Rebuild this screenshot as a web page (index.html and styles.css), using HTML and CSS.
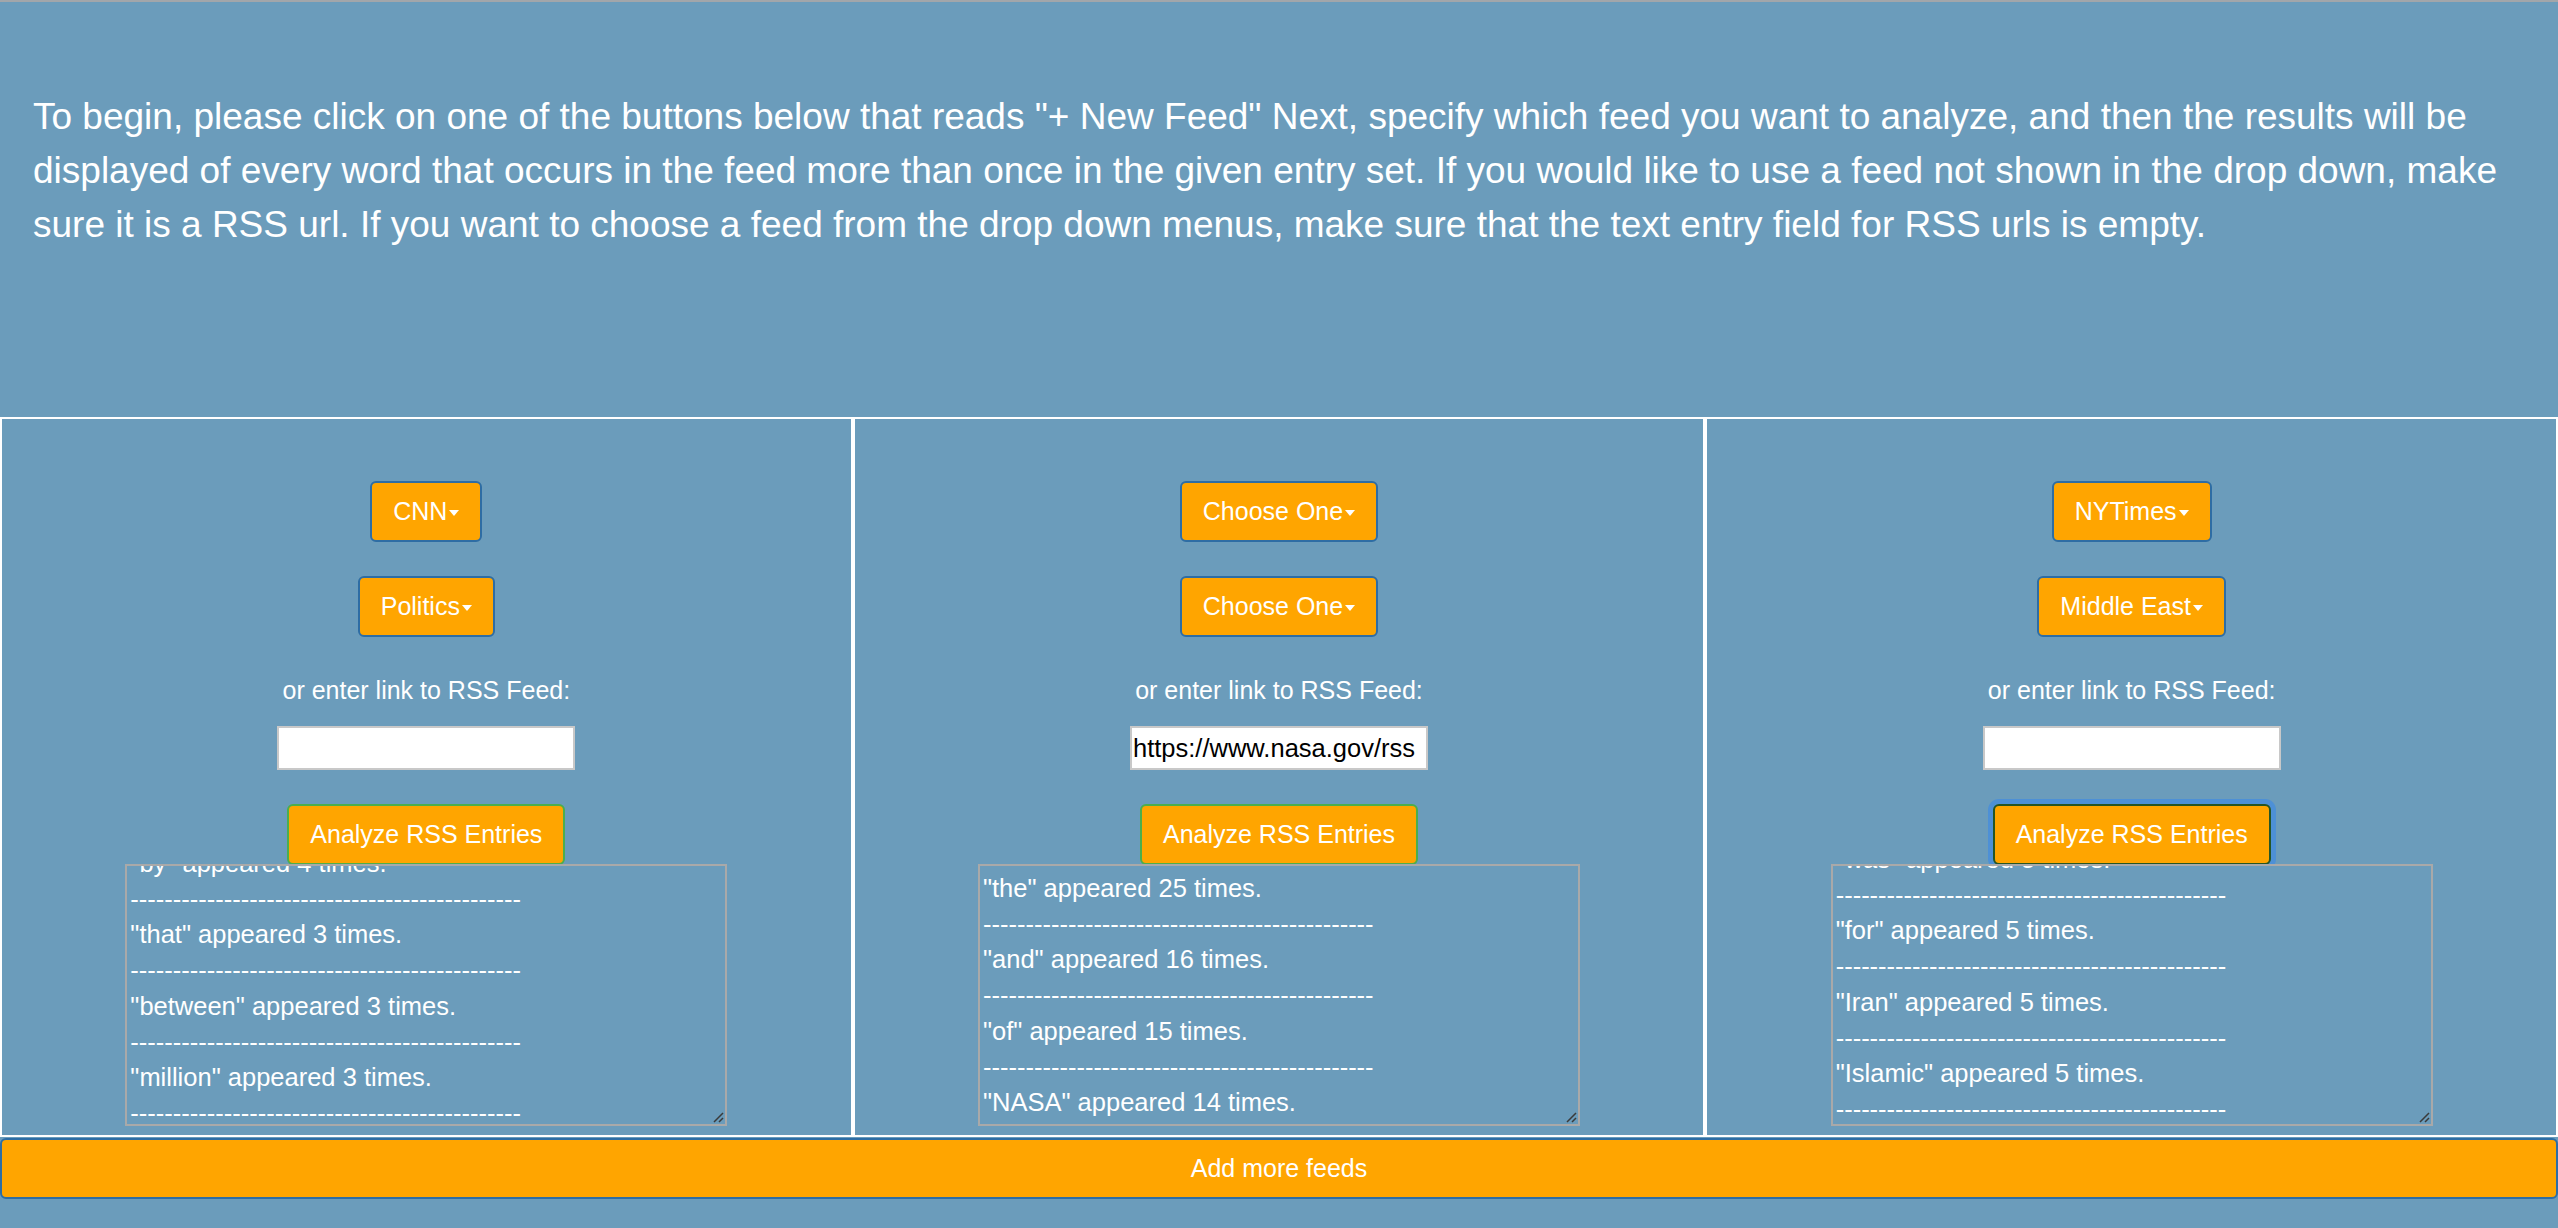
FILE: index.html
```html
<!DOCTYPE html>
<html lang="en">
<head>
<meta charset="utf-8">
<title>RSS Word Analyzer</title>
<link rel="stylesheet" href="styles.css">
</head>
<body>
<header class="intro">
  <p class="intro-text">To begin, please click on one of the buttons below that reads "+ New Feed" Next, specify which feed you want to analyze, and then the results will be displayed of every word that occurs in the feed more than once in the given entry set. If you would like to use a feed not shown in the drop down, make sure it is a RSS url. If you want to choose a feed from the drop down menus, make sure that the text entry field for RSS urls is empty.</p>
</header>
<main class="feeds">
  <section class="feed">
    <button class="btn dd">CNN<span class="caret"></span></button>
    <button class="btn dd">Politics<span class="caret"></span></button>
    <label class="rss-label">or enter link to RSS Feed:</label>
    <input class="rss-input" type="text" value="">
    <button class="btn analyze">Analyze RSS Entries</button>
    <div class="results">
      <div class="results-inner shift-left">
        <div class="line">"by" appeared 4 times.</div>
        <div class="line">----------------------------------------------</div>
        <div class="line">"that" appeared 3 times.</div>
        <div class="line">----------------------------------------------</div>
        <div class="line">"between" appeared 3 times.</div>
        <div class="line">----------------------------------------------</div>
        <div class="line">"million" appeared 3 times.</div>
        <div class="line">----------------------------------------------</div>
      </div>
      <svg class="grip" width="12" height="12" viewBox="0 0 12 12"><path d="M11 2 L2 11 M11 7 L7 11" stroke="#3a3a3a" stroke-width="1.5" fill="none"/></svg>
    </div>
  </section>
  <section class="feed">
    <button class="btn dd">Choose One<span class="caret"></span></button>
    <button class="btn dd">Choose One<span class="caret"></span></button>
    <label class="rss-label">or enter link to RSS Feed:</label>
    <input class="rss-input" type="text" value="https://www.nasa.gov/rss">
    <button class="btn analyze">Analyze RSS Entries</button>
    <div class="results">
      <div class="results-inner">
        <div class="line">"the" appeared 25 times.</div>
        <div class="line">----------------------------------------------</div>
        <div class="line">"and" appeared 16 times.</div>
        <div class="line">----------------------------------------------</div>
        <div class="line">"of" appeared 15 times.</div>
        <div class="line">----------------------------------------------</div>
        <div class="line">"NASA" appeared 14 times.</div>
        <div class="line">----------------------------------------------</div>
      </div>
      <svg class="grip" width="12" height="12" viewBox="0 0 12 12"><path d="M11 2 L2 11 M11 7 L7 11" stroke="#3a3a3a" stroke-width="1.5" fill="none"/></svg>
    </div>
  </section>
  <section class="feed">
    <button class="btn dd">NYTimes<span class="caret"></span></button>
    <button class="btn dd">Middle East<span class="caret"></span></button>
    <label class="rss-label">or enter link to RSS Feed:</label>
    <input class="rss-input" type="text" value="">
    <button class="btn analyze is-focused">Analyze RSS Entries</button>
    <div class="results">
      <div class="results-inner shift-right">
        <div class="line">"was" appeared 5 times.</div>
        <div class="line">----------------------------------------------</div>
        <div class="line">"for" appeared 5 times.</div>
        <div class="line">----------------------------------------------</div>
        <div class="line">"Iran" appeared 5 times.</div>
        <div class="line">----------------------------------------------</div>
        <div class="line">"Islamic" appeared 5 times.</div>
        <div class="line">----------------------------------------------</div>
      </div>
      <svg class="grip" width="12" height="12" viewBox="0 0 12 12"><path d="M11 2 L2 11 M11 7 L7 11" stroke="#3a3a3a" stroke-width="1.5" fill="none"/></svg>
    </div>
  </section>
</main>
<button class="add-more">Add more feeds</button>
</body>
</html>
```

FILE: styles.css
```css
* { box-sizing: border-box; }
html, body { margin: 0; padding: 0; }
body {
  background: #6b9cbb;
  color: #fff;
  font-family: "Liberation Sans", Arial, sans-serif;
  border-top: 2px solid #a2a6aa;
  height: 1228px;
  overflow: hidden;
}
.intro {
  height: 415px;
  padding: 88px 20px 0 33px;
}
.intro-text {
  margin: 0;
  font-size: 37px;
  line-height: 54px;
}
.feeds {
  display: grid;
  grid-template-columns: repeat(3, 1fr);
}
.feed {
  border: 2px solid #fff;
  height: 720px;
  display: flex;
  flex-direction: column;
  align-items: center;
  padding-top: 62px;
}
.btn {
  font-family: inherit;
  font-size: 25px;
  color: #fff;
  background: #ffa500;
  border: 2px solid #2e6da4;
  border-radius: 6px;
  height: 61px;
  padding: 0 21px;
  display: inline-flex;
  align-items: center;
  flex: none;
}
.dd + .dd { margin-top: 34px; }
.caret {
  width: 0;
  height: 0;
  border-top: 6px solid #fff;
  border-left: 5px solid transparent;
  border-right: 5px solid transparent;
  margin-left: 2px;
  margin-top: 2px;
}
.rss-label {
  margin-top: 36px;
  font-size: 25px;
  line-height: 34px;
}
.rss-input {
  margin-top: 19px;
  width: 298px;
  height: 44px;
  border: 2px solid #c8c8c8;
  background: #fff;
  color: #000;
  font-family: inherit;
  font-size: 25.5px;
  padding: 0 1px;
}
.analyze {
  margin-top: 34px;
  border-color: #4cae4c;
}
.analyze.is-focused {
  border-color: #255625;
  box-shadow: 0 0 0 5px #4d90d6;
}
.results {
  position: relative;
  margin-top: -1px;
  width: 602px;
  height: 262px;
  flex: none;
  border: 2px solid #a9a9a9;
  background: #6b9cbb;
  overflow: hidden;
  font-size: 25.5px;
  line-height: 35.7px;
  padding: 5px 3px 0;
}
.results-inner.shift-left { margin-top: -25px; }
.results-inner.shift-right { margin-top: -29px; }
.line { white-space: nowrap; }
.grip {
  position: absolute;
  right: 1px;
  bottom: 1px;
}
.add-more {
  display: block;
  width: 100%;
  height: 61px;
  margin-top: 1px;
  background: #ffa500;
  border: 2px solid #2e6da4;
  border-radius: 6px;
  color: #fff;
  font-family: inherit;
  font-size: 25px;
}
```
